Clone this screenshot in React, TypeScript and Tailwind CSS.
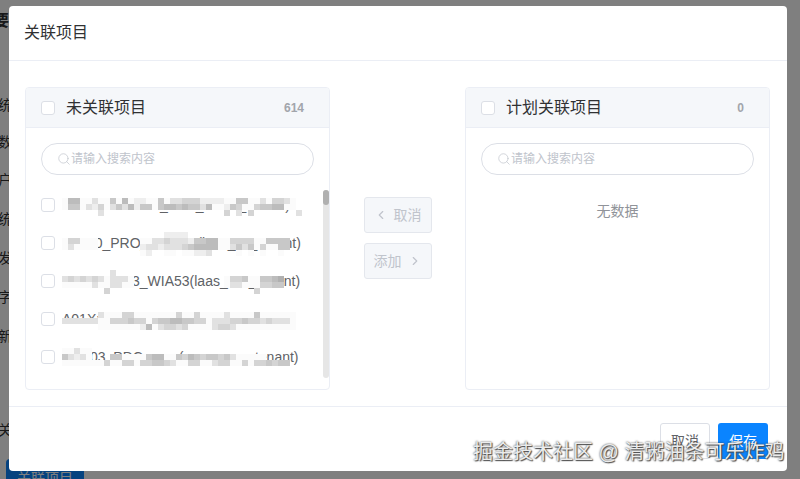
import { ChevronLeft, ChevronRight, Search } from "lucide-react";

const FONT = "font-['Liberation_Sans','Noto_Sans_CJK_SC',sans-serif]";

// mosaic over the list names: each cell is 6px, 0 = clear, 1 = white-out, 2-7 = grey
const ROWS = [
  {
    text: "xxxxxxxxxxxxxx_xxxx_xxxxx_tenant)",
    dy: 8,
    cells: [
      "1661131151612211513344422221155113144310",
      "1551324135362551566565536112541145566110",
      "0000003000000000000000000004030400000003",
    ],
  },
  {
    text: "xxxx-0_PRO_xxxxxxx(iaas_xx_tenant)",
    dy: 4,
    cells: [
      "0000000000000000022220000000000000000000",
      "1441110000000113343332556611444411555500",
      "1311110000000233233345666611353514115500",
      "0000000000000120011011223000010101001000",
    ],
  },
  {
    text: "xxxxxxxxxx3_WIA53(laas_xxx_tenant)",
    dy: 4,
    cells: [
      "0000000030000000000000000000000000000000",
      "3434343133310000000000000001445115567000",
      "1111131133110000000000000001331114455000",
      "0000000400000000000000000000000040000000",
    ],
  },
  {
    text: "A01X:xxxxxxxxxxxxxxxxxxxx_tenant)",
    dy: 8,
    cells: [
      "0000003111441111111411411113111151111110",
      "3333331144454414556655441333445443433310",
      "0000001111111261344341111344311111111110",
    ],
  },
  {
    text: "xxxx03_PDC_xxxx(xxxxx_xxx_tenant)",
    dy: 6,
    cells: [
      "1131100000000000000000000000000000000000",
      "5323100055111156611546545545311111000000",
      "1111111411441445543114411344114144545500",
    ],
  },
];

const SHADES = ["#ffffff", "#fbfbfb", "#eeeeee", "#e1e1e1", "#d4d4d4", "#c8c8c8", "#bcbcbc", "#b0b0b0"];

function Mosaic({ cells, dy }: { cells: string[]; dy: number }) {
  return (
    <svg width="245" height="30" className="absolute left-0 top-0">
      {cells.map((line, y) =>
        line.split("").map((c, x) =>
          c === "0" ? null : (
            <rect key={`${x}-${y}`} x={x * 6} y={dy + y * 6} width="6" height="6" fill={SHADES[Number(c)]} />
          ),
        ),
      )}
    </svg>
  );
}

function Checkbox() {
  return <span className="w-[14px] h-[14px] shrink-0 rounded-[3px] border border-[#dcdfe6] bg-white" />;
}

function SearchBox() {
  return (
    <div className="h-8 rounded-full border border-[#dcdfe6] flex items-center pl-[15px] text-xs text-[#c0c4cc]">
      <Search className="w-[14px] h-[14px]" strokeWidth={1.2} />
      <span>请输入搜索内容</span>
    </div>
  );
}

function Panel({ title, count, children }: { title: string; count: string; children: React.ReactNode }) {
  return (
    <div className="w-[305px] h-[303px] border border-[#ebeef5] rounded flex flex-col overflow-hidden">
      <div className="h-10 shrink-0 bg-[#f5f7fa] border-b border-[#ebeef5] flex items-center pl-[15px] pr-[25px]">
        <Checkbox />
        <span className="ml-[11px] text-base text-[#303133]">{title}</span>
        <span className="ml-auto text-xs font-bold text-[#a2a5ab]">{count}</span>
      </div>
      <div className="px-[15px] pt-[15px]">
        <SearchBox />
      </div>
      {children}
    </div>
  );
}

function ArrowButton({ children }: { children: React.ReactNode }) {
  return (
    <div className="w-[68px] h-9 rounded-[3px] border border-[#e4e7ed] bg-[#f5f7fa] text-sm text-[#c0c4cc] flex items-center justify-center gap-[6px]">
      {children}
    </div>
  );
}

export default function App() {
  return (
    <div className={`relative w-[800px] h-[479px] overflow-hidden bg-white ${FONT}`}>
      {/* page behind the dialog */}
      <div className="flex flex-col items-start text-sm text-[#303133] -ml-[2px] pt-[9px] leading-5">
        <span className="text-base font-bold -ml-[5px]">要</span>
        <span className="mt-[19px] -ml-[5px]">：</span>
        <span className="mt-[23px]">统</span>
        <span className="mt-[17px]">数</span>
        <span className="mt-[18px]">户</span>
        <span className="mt-[19px]">统</span>
        <span className="mt-[19px]">发</span>
        <span className="mt-[19px]">字</span>
        <span className="mt-[19px]">新</span>
        <span className="mt-[74px]">关</span>
        <div className="mt-[19px] ml-[8px] w-[78px] h-9 rounded bg-[#0a84ff] text-white flex justify-center pt-[9px]">
          关联项目
        </div>
      </div>
      <div className="absolute inset-0 bg-black/50" />

      {/* dialog */}
      <div className="absolute left-[9px] top-[6px] w-[778px] h-[465px] bg-white rounded flex flex-col">
        <div className="h-[55px] shrink-0 border-b border-[#ebeef5] flex items-center px-[15px] text-base text-[#303133]">
          关联项目
        </div>
        <div className="h-[346px] shrink-0 border-b border-[#ebeef5] pt-[26px] pl-4 pr-[17px] flex justify-between">
          <Panel title="未关联项目" count="614">
            <div className="flex mt-[15px] h-[188px]">
              <div className="flex-1 flex flex-col gap-2 pl-[15px] overflow-hidden">
                {ROWS.map((row, i) => (
                  <div key={i} className="h-[30px] shrink-0 flex items-center">
                    <Checkbox />
                    <div className="relative ml-[7px] w-[245px] h-[30px] text-sm leading-[30px] text-[#606266] whitespace-nowrap overflow-hidden">
                      {row.text}
                      <Mosaic cells={row.cells} dy={row.dy} />
                    </div>
                  </div>
                ))}
              </div>
              <div className="w-[6px] h-full shrink-0 bg-[#e6e6e6] rounded-[3px]">
                <div className="h-[15px] rounded-[3px] bg-[#b0b0b0]" />
              </div>
            </div>
          </Panel>

          <div className="flex flex-col gap-[10px] pt-[110px]">
            <ArrowButton>
              <ChevronLeft className="w-[14px] h-[14px]" />
              <span>取消</span>
            </ArrowButton>
            <ArrowButton>
              <span>添加</span>
              <ChevronRight className="w-[14px] h-[14px]" />
            </ArrowButton>
          </div>

          <Panel title="计划关联项目" count="0">
            <div className="text-center text-sm text-[#909399] mt-[26px]">无数据</div>
          </Panel>
        </div>
        <div className="flex justify-end gap-2 pt-4 pr-[19px]">
          <div className="w-[50px] h-9 rounded-[3px] border border-[#dcdfe6] text-sm text-[#606266] flex items-center justify-center">
            取消
          </div>
          <div className="w-[50px] h-9 rounded-[3px] bg-[#0a84ff] text-sm text-white flex items-center justify-center">
            保存
          </div>
        </div>
      </div>

      {/* site watermark */}
      <div className="absolute left-[473px] top-[438px] text-[20px] leading-7 whitespace-nowrap text-[#ececec] [text-shadow:0_0_2px_#333,1px_1px_1px_#555]">
        掘金技术社区 @ 清粥油条可乐炸鸡
      </div>
    </div>
  );
}
